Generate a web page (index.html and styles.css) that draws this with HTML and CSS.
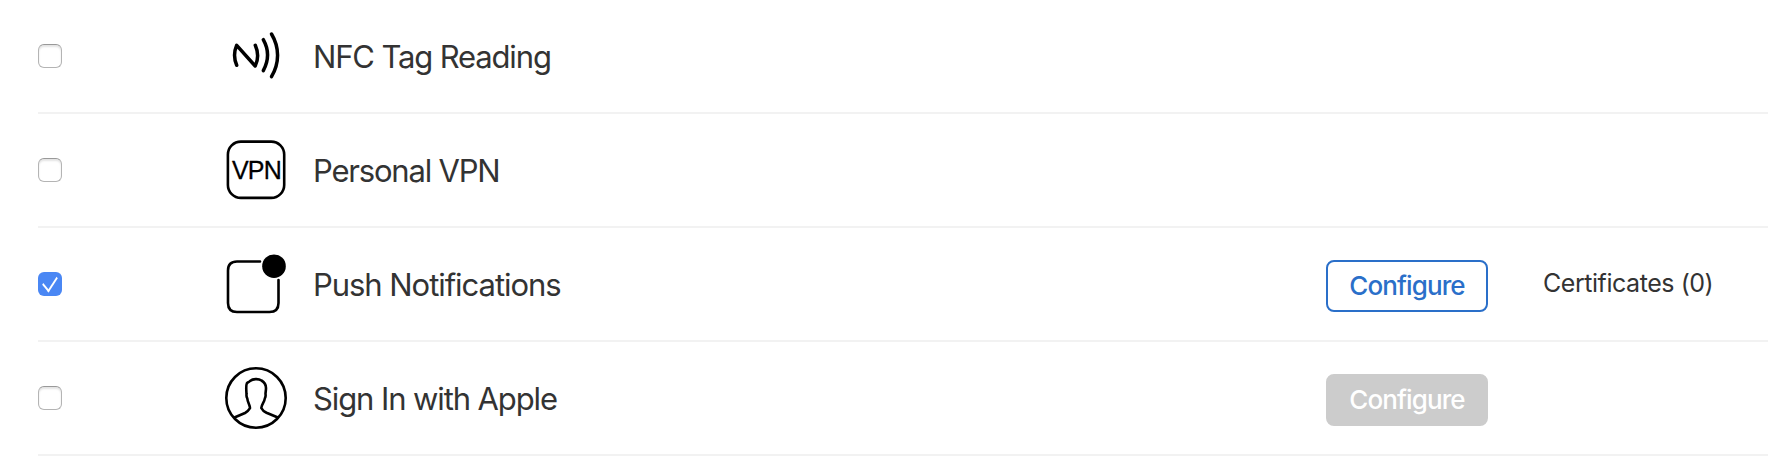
FILE: index.html
```html
<!DOCTYPE html>
<html lang="en">
<head>
    <meta charset="UTF-8">
    <meta name="viewport" content="width=device-width, initial-scale=1.0">
    <title>Capabilities</title>
    <link rel="stylesheet" href="styles.css">
</head>
<body>
    <ul class="capabilities">
        <li class="row">
            <input type="checkbox" class="check" aria-label="NFC Tag Reading">
            <svg class="icon" viewBox="0 0 64 64">
                <g class="waves">
                    <path d="M12.7 41.3C10 35 10 27.500 12.700 21.300L31.200 42C34.300 35.500 34.300 28 31.300 21.300"/>
                    <path d="M39.300 15.700C44.800 25.500 44.800 36.500 39.300 46.700"/>
                    <path d="M47.500 10C55.600 23.500 55.600 39 47.500 52.700"/>
                </g>
            </svg>
            <span class="name nfc">NFC Tag Reading</span>
        </li>
        <li class="row">
            <input type="checkbox" class="check" aria-label="Personal VPN">
            <svg class="icon" viewBox="0 0 64 64">
                <rect x="3.900" y="3.600" width="56.300" height="56.300" rx="13"/>
                <text x="8" y="41">VPN</text>
            </svg>
            <span class="name vpn">Personal VPN</span>
        </li>
        <li class="row">
            <input type="checkbox" class="check" aria-label="Push Notifications" checked>
            <svg class="icon" viewBox="0 0 64 64">
                <path d="M36 9.500H13Q4 9.500 4 18.500V51Q4 60 13 60H45.500Q54.500 60 54.500 51V28"/>
                <circle class="dot" cx="50" cy="14.200" r="11.800"/>
            </svg>
            <span class="name push">Push Notifications</span>
            <button class="configure">Configure</button>
            <span class="certs">Certificates (0)</span>
        </li>
        <li class="row">
            <input type="checkbox" class="check" aria-label="Sign In with Apple">
            <svg class="icon" viewBox="0 0 64 64">
                <circle cx="32" cy="32" r="29.700"/>
                <path d="M11 51.300L21 47C24 45.500 24.500 44.500 26 42C26 39 23.500 36 23.300 32.500C22 30 22.600 29 22.500 28C22.300 24 21.800 19.500 22.800 17.500C23.500 16.300 25 16.200 26 15C29 12.700 34.500 12.500 37.500 14.500C41 16.500 42 19 42 22C42 24.500 41.500 26.500 41.500 28C41.800 29.500 41.600 31 40.800 32.500C40.500 36 37.500 38.500 37.300 42C38.500 44.500 39.500 45.300 42.500 46.700L53.300 51.300"/>
            </svg>
            <span class="name sign">Sign In with Apple</span>
            <button class="configure" disabled>Configure</button>
        </li>
    </ul>
</body>
</html>
```

FILE: styles.css
```css
*{
    margin: 0;
    padding: 0;
    box-sizing: border-box;
}
body{
    background-color: #fff;
    color: #333;
    font-family: Inter, "Liberation Sans", sans-serif;
    overflow: hidden;
}
li{
    list-style: none;
}
.capabilities{
    padding-left: 38px;
}
.row{
    display: grid;
    grid-template-columns: 186px 89px 1013px 217px 1fr;
    align-items: center;
    height: 114px;
    border-bottom: 2px solid #f2f2f2;
}
.check{
    appearance: none;
    width: 24px;
    height: 24px;
    border: 1px solid #b4b4b4;
    border-top-color: #999;
    border-radius: 6px;
    background-color: #fff;
    box-shadow: inset 0 2px 2px #e4e4e4;
}
.check:checked{
    display: flex;
    align-items: flex-start;
    border: none;
    background-color: #4a87f4;
    box-shadow: none;
}
.check:checked::before{
    content: "";
    width: 8px;
    height: 15px;
    margin: 1px 0 0 7px;
    border: solid #fff;
    border-width: 0 2.8px 2.8px 0;
    transform: matrix(0.636, 0.77, -0.545, 0.84, 0, 0);
}
.icon{
    width: 64px;
    height: 64px;
    fill: none;
    stroke: #000;
    stroke-width: 2.6;
    stroke-linecap: round;
    stroke-linejoin: round;
}
.icon .waves{
    stroke-width: 3.5;
}
.icon text{
    fill: #000;
    stroke: #000;
    stroke-width: 0.3;
    font-family: "Liberation Sans", Arial, sans-serif;
    font-size: 25px;
    letter-spacing: -0.8px;
}
.icon .dot{
    fill: #000;
    stroke: none;
}
.name{
    padding-top: 2px;
    font-size: 31px;
    line-height: 40px;
    white-space: nowrap;
}
.nfc{
    letter-spacing: -1.15px;
}
.vpn{
    letter-spacing: -1.2px;
}
.push{
    letter-spacing: -1.05px;
}
.sign{
    letter-spacing: -1.1px;
}
.configure{
    width: 162px;
    height: 52px;
    margin-top: 4px;
    border: 2px solid #2a6fc9;
    border-radius: 8px;
    background-color: #fff;
    color: #2a6fc9;
    font-family: inherit;
    font-size: 26px;
    font-weight: 500;
    line-height: 46px;
    letter-spacing: -0.9px;
}
.configure:disabled{
    border-color: #ccc;
    background-color: #ccc;
    color: #fff;
}
.certs{
    padding-bottom: 2px;
    font-size: 25px;
    line-height: 32px;
    white-space: nowrap;
    letter-spacing: -0.45px;
}
```
